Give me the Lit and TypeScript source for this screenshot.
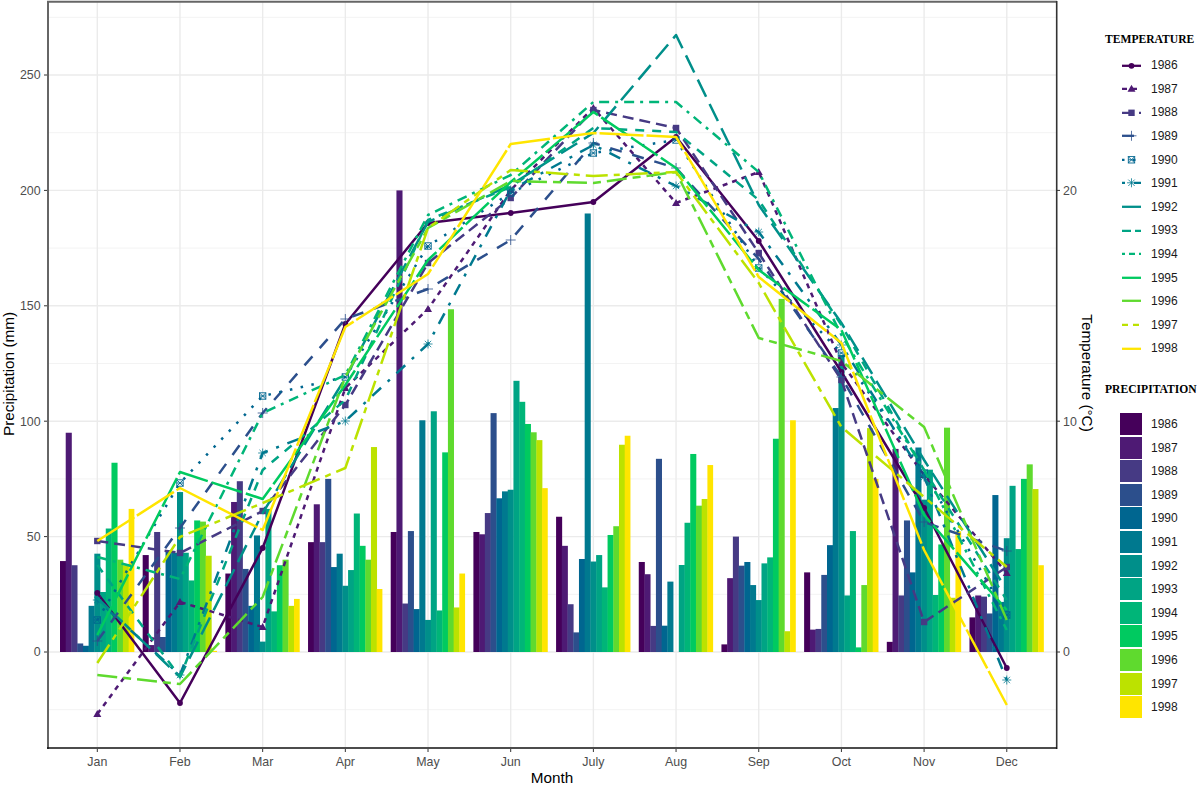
import { LitElement, html, svg, css } from "lit";
import { customElement } from "lit/decorators.js";

const MONTHS = ["Jan", "Feb", "Mar", "Apr", "May", "Jun", "July", "Aug", "Sep", "Oct", "Nov", "Dec"];
const YEARS = [1986, 1987, 1988, 1989, 1990, 1991, 1992, 1993, 1994, 1995, 1996, 1997, 1998];
const COLORS = ["#45005a", "#4e1a74", "#463a84", "#2c4f8c", "#006690", "#00798f", "#008f8a", "#00a484", "#00b578", "#00ca60", "#5fda2e", "#bce200", "#ffe500"];

// precipitation (mm): one row per month, one column per year
const RAIN = [
  [39.4, 95, 37.6, 3.7, 2.7, 20, 42.6, 26, 53.5, 82, 40, 37.6, 62],
  [42, 3, 52, 6.5, 44, 43, 69.3, 43, 31, 57, 56.5, 41.7, 0.5],
  [34, 65, 74, 36, 20, 50.5, 4.5, 62, 17.6, 37.6, 40, 20, 23],
  [47.6, 64, 47.6, 75, 36.8, 42.6, 28.7, 35.5, 60, 46, 40, 88.8, 27.3],
  [52, 200, 21, 52.4, 18.6, 100.4, 13.9, 104.3, 18, 86.5, 148.5, 19.3, 34],
  [52, 51, 60.2, 103.5, 66.6, 69.6, 70.3, 117.5, 108.4, 98.8, 95.2, 91.8, 71],
  [58.6, 46, 20.7, 8.5, 40.3, 190, 39.2, 42, 28, 50.7, 54.5, 89.8, 93.7],
  [39, 33.7, 11.3, 83.7, 11.4, 30.5, 0, 37.7, 56, 85.8, 63.4, 66.3, 81],
  [3.3, 32, 50, 37.4, 39, 29, 22.5, 38.4, 41, 92.4, 153, 9, 100.4],
  [34.5, 9.7, 10, 33.4, 46.3, 105.7, 128.7, 24.5, 52.4, 2, 29, 97, 75],
  [4.4, 88, 24.5, 57, 34.5, 88.6, 66, 79, 24.7, 46.6, 97.2, 23.5, 52.3],
  [15, 24.5, 24, 16.7, 68, 21.7, 49.3, 72, 44.6, 75, 81.3, 70.6, 37.6],
];

// temperature drawn as the y position on the chart, Jan..Dec, per year
const TEMP_Y = [
  [593, 703, 548, 324, 223, 213, 202, 137, 241, 372, 508, 668],
  [714, 602, 627, 388, 309, 190, 108, 203, 172, 363, 475, 573],
  [541, 553, 511, 405, 263, 198, 110, 128, 253, 380, 622, 567],
  [641, 528, 413, 319, 289, 240, 143, 168, 259, 377, 522, 551],
  [620, 483, 396, 377, 246, 193, 153, 140, 268, 353, 473, 615],
  [600, 675, 453, 421, 344, 190, 145, 186, 232, 345, 477, 680],
  [598, 677, 513, 378, 222, 185, 133, 35, 205, 323, 460, 590],
  [565, 677, 470, 400, 220, 187, 128, 132, 200, 325, 470, 600],
  [557, 579, 413, 375, 215, 175, 102, 102, 172, 335, 470, 630],
  [635, 472, 499, 385, 260, 182, 112, 168, 270, 330, 515, 610],
  [675, 684, 597, 377, 228, 181, 183, 172, 338, 361, 427, 620],
  [663, 537, 503, 468, 228, 170, 176, 172, 283, 427, 497, 567],
  [541, 488, 530, 327, 274, 144, 133, 137, 277, 343, 550, 705],
];

const DASH = ["", "5 5", "11 6", "12 11", "2.5 8.5", "3 9 12 9", "19 8", "9 8", "10 6 3 6", "32 4", "20 6 8 6", "22 6 6 6", "44 3"];
const KEY_DASH = ["", "5 5", "11 6", "12 11", "2.5 8.5", "3 9 12 9", "", "9 4", "3 4 6 4", "", "", "6 5", ""];

const monthX = (i: number) => 97.3 + i * 82.68;
const rainY = (v: number) => 652 - v * 2.308;
const tempTickY = (c: number) => 652 - c * 23.08;
const BAR = 5.72;

function marker(i: number, x: number, y: number) {
  const c = COLORS[i];
  switch (i) {
    case 0:
      return svg`<circle cx=${x} cy=${y} r="2.9" fill=${c}></circle>`;
    case 1:
      return svg`<path d="M${x - 4} ${y + 3}L${x} ${y - 4}L${x + 4} ${y + 3}Z" fill=${c}></path>`;
    case 2:
      return svg`<rect x=${x - 3.2} y=${y - 3.2} width="6.4" height="6.4" fill=${c}></rect>`;
    case 3:
      return svg`<path d="M${x - 5} ${y}H${x + 5}M${x} ${y - 5}V${y + 5}" stroke=${c} stroke-width="0.8" fill="none"></path>`;
    case 4:
      return svg`<g stroke=${c} stroke-width="0.9" fill="none"><rect x=${x - 3.2} y=${y - 3.2} width="6.4" height="6.4"></rect><path d="M${x - 3.2} ${y - 3.2}L${x + 3.2} ${y + 3.2}M${x + 3.2} ${y - 3.2}L${x - 3.2} ${y + 3.2}M${x - 3.2} ${y}H${x + 3.2}"></path></g>`;
    case 5:
      return svg`<path d="M${x - 4.5} ${y}H${x + 4.5}M${x} ${y - 4.5}V${y + 4.5}M${x - 3.2} ${y - 3.2}L${x + 3.2} ${y + 3.2}M${x + 3.2} ${y - 3.2}L${x - 3.2} ${y + 3.2}" stroke=${c} stroke-width="0.8" fill="none"></path>`;
    default:
      return svg``;
  }
}

@customElement("app-root")
export class AppRoot extends LitElement {
  static styles = css`
    :host {
      display: flex;
      width: 1200px;
      height: 785px;
      background: #fff;
      overflow: hidden;
      font-family: "Liberation Sans", Arial, sans-serif;
    }
    .chart {
      flex: none;
      width: 1100px;
      height: 785px;
    }
    .tick {
      font-size: 12.4px;
      fill: #4d4d4d;
    }
    .title {
      font-size: 15.3px;
      fill: #000;
    }
    .legends {
      flex: none;
      width: 100px;
      padding: 33px 0 0 5px;
      box-sizing: border-box;
    }
    .legend-title {
      font-family: "Liberation Serif", "Times New Roman", serif;
      font-weight: bold;
      font-size: 11.6px;
      line-height: 14px;
      color: #000;
      white-space: nowrap;
    }
    .rows {
      margin-top: 6.5px;
      margin-bottom: 22.5px;
    }
    .swatches {
      margin-top: 15.5px;
    }
    .row {
      display: flex;
      align-items: center;
      height: 23.6px;
      font-size: 12px;
      color: #1a1a1a;
    }
    .key {
      flex: none;
      width: 46px;
      height: 23.6px;
    }
    .swatch-cell {
      flex: none;
      width: 46px;
      padding-left: 15px;
      box-sizing: border-box;
    }
    .swatch {
      width: 22px;
      height: 22px;
    }
  `;

  private grid() {
    const major = [0, 50, 100, 150, 200, 250];
    const minor = [-25, 25, 75, 125, 175, 225, 275];
    return svg`
      ${minor.map((v) => svg`<line x1="49" x2="1056" y1=${rainY(v)} y2=${rainY(v)} stroke="#f3f3f3" stroke-width="1"></line>`)}
      ${major.map((v) => svg`<line x1="49" x2="1056" y1=${rainY(v)} y2=${rainY(v)} stroke="#ebebeb" stroke-width="1.4"></line>`)}
      ${MONTHS.map((_, i) => svg`<line x1=${monthX(i)} x2=${monthX(i)} y1="2" y2="747" stroke="#ebebeb" stroke-width="1.4"></line>`)}
    `;
  }

  private bars() {
    return RAIN.map((row, m) =>
      row.map((v, y) => {
        const x = monthX(m) - 37.3 + y * BAR;
        const w = BAR + (y < 12 ? 0.35 : 0);
        return svg`<rect x=${x} y=${rainY(v)} width=${w} height=${v * 2.308} fill=${COLORS[y]}></rect>`;
      })
    );
  }

  private lines() {
    return TEMP_Y.map((ys, i) => {
      const pts = ys.map((y, m) => `${monthX(m)},${y}`).join(" ");
      return svg`
        <polyline points=${pts} fill="none" stroke=${COLORS[i]} stroke-width="2.5" stroke-dasharray=${DASH[i]} stroke-linejoin="round"></polyline>
        ${i < 6 ? ys.map((y, m) => marker(i, monthX(m), y)) : ""}
      `;
    });
  }

  private axes() {
    const left = [0, 50, 100, 150, 200, 250];
    const right = [0, 10, 20];
    return svg`
      <line x1="48" x2="48" y1="1" y2="749" stroke="#666" stroke-width="2"></line>
      <line x1="47" x2="1057" y1="1.7" y2="1.7" stroke="#666" stroke-width="2"></line>
      <line x1="1056.7" x2="1056.7" y1="1" y2="749" stroke="#333" stroke-width="1.6"></line>
      <line x1="47" x2="1057" y1="748" y2="748" stroke="#111" stroke-width="1.6"></line>
      ${left.map((v) => svg`
        <line x1="44" x2="47" y1=${rainY(v)} y2=${rainY(v)} stroke="#333" stroke-width="1"></line>
        <text class="tick" x="40.6" y=${rainY(v) + 4.4} text-anchor="end">${v}</text>`)}
      ${right.map((v) => svg`
        <line x1="1057" x2="1060" y1=${tempTickY(v)} y2=${tempTickY(v)} stroke="#333" stroke-width="1"></line>
        <text class="tick" x="1063" y=${tempTickY(v) + 4.4}>${v}</text>`)}
      ${MONTHS.map((m, i) => svg`
        <line x1=${monthX(i)} x2=${monthX(i)} y1="749" y2="752" stroke="#333" stroke-width="1"></line>
        <text class="tick" x=${monthX(i)} y="765.5" text-anchor="middle">${m}</text>`)}
      <text class="title" x="552" y="783" text-anchor="middle">Month</text>
      <text class="title" transform="translate(14 374) rotate(-90)" text-anchor="middle">Precipitation (mm)</text>
      <text class="title" transform="translate(1082 373) rotate(90)" text-anchor="middle">Temperature (°C)</text>
    `;
  }

  render() {
    return html`
      <svg class="chart" viewBox="0 0 1100 785">
        ${this.grid()} ${this.bars()} ${this.lines()} ${this.axes()}
      </svg>
      <div class="legends">
        <div class="legend-title">TEMPERATURE</div>
        <div class="rows">
          ${YEARS.map(
            (y, i) => html`<div class="row">
              <svg class="key" viewBox="0 0 46 23.6">
                <line x1="17" x2="36" y1="11.8" y2="11.8" stroke=${COLORS[i]} stroke-width="2.3" stroke-dasharray=${KEY_DASH[i]}></line>
                ${i < 6 ? marker(i, 26.5, 11.8) : ""}
              </svg>
              <span>${y}</span>
            </div>`
          )}
        </div>
        <div class="legend-title">PRECIPITATION</div>
        <div class="swatches">
          ${YEARS.map(
            (y, i) => html`<div class="row">
              <div class="swatch-cell"><div class="swatch" style="background:${COLORS[i]}"></div></div>
              <span>${y}</span>
            </div>`
          )}
        </div>
      </div>
    `;
  }
}
